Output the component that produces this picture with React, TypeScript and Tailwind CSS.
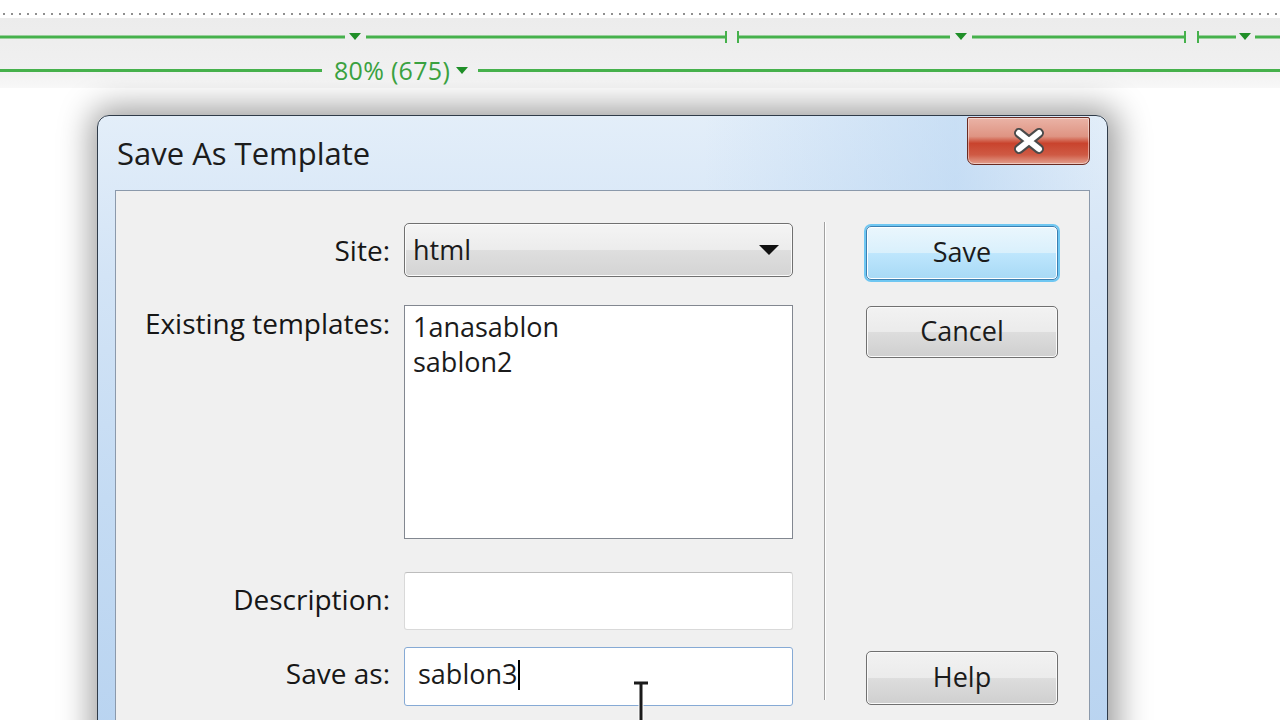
import React from "react";

const GREEN = "#46b14c";
const DARK_GREEN = "#1f8f28";

function RulerTop() {
  // upper guide: segments, drop markers and column ticks
  const seg = (x1: number, x2: number) => (
    <line key={`s${x1}`} x1={x1} y1={7} x2={x2} y2={7} stroke={GREEN} strokeWidth={3} />
  );
  const tick = (x: number) => (
    <line key={`t${x}`} x1={x} y1={1} x2={x} y2={13} stroke={GREEN} strokeWidth={2} />
  );
  const tri = (cx: number) => (
    <polygon key={`p${cx}`} points={`${cx - 6},3 ${cx + 6},3 ${cx},10`} fill={DARK_GREEN} />
  );
  return (
    <svg width={1280} height={14} className="block">
      {seg(0, 345)}
      {tri(355)}
      {seg(366, 726)}
      {tick(726)}
      {tick(738)}
      {seg(738, 950)}
      {tri(961)}
      {seg(972, 1185)}
      {tick(1185)}
      {tick(1198)}
      {seg(1198, 1236)}
      {tri(1245)}
      {seg(1255, 1280)}
    </svg>
  );
}

function Ruler() {
  return (
    <div className="h-[88px] w-full">
      <div className="h-[18px] bg-white pt-[13px]">
        <div className="h-[2px] w-full bg-[radial-gradient(circle,#8f8f8f_1px,transparent_1.3px)] bg-[length:8px_2px]" />
      </div>
      <div className="h-[70px] bg-[linear-gradient(180deg,#ececec,#f0f0f0_70%,#f8f8f8)] pt-[12px]">
        <RulerTop />
        <div className="mt-[12px] flex h-[28px] items-center">
          <div className="h-[3px] w-[322px] bg-[#46b14c]" />
          <span className="ml-[12px] text-[25px] leading-none tracking-[0.3px] text-[#3aa140]">80% (675)</span>
          <svg width={12} height={8} className="ml-[6px] mt-[2px]">
            <polygon points="0,0 12,0 6,7" fill={DARK_GREEN} />
          </svg>
          <div className="ml-[10px] h-[3px] flex-1 bg-[#46b14c]" />
        </div>
      </div>
    </div>
  );
}

function CloseButton() {
  return (
    <div className="mr-[17px] mt-[1px] flex h-[48px] w-[123px] items-center justify-center rounded-b-[7px] rounded-t-[2px] border border-[#6a2b22] bg-[linear-gradient(180deg,#eab3a6_0%,#df9483_40%,#c9432d_55%,#cf5a44_80%,#e3a08f_100%)] shadow-[inset_0_0_0_1px_rgba(255,255,255,0.45)]">
      <svg width={36} height={28} viewBox="0 0 36 28">
        <path d="M8 6 L28 22 M28 6 L8 22" stroke="#4a4a4a" strokeWidth={10} strokeLinecap="round" />
        <path d="M8 6 L28 22 M28 6 L8 22" stroke="#ffffff" strokeWidth={6} strokeLinecap="round" />
      </svg>
    </div>
  );
}

function PushButton({ label, primary }: { label: string; primary?: boolean }) {
  const cls = primary
    ? "border-[#3c7fb1] bg-[linear-gradient(180deg,#eaf6fd_0%,#d9f0fc_50%,#bee6fd_51%,#a7d9f5_100%)] shadow-[0_0_0_2px_#6fc7f2,inset_0_0_0_1px_#ffffff]"
    : "border-[#707070] bg-[linear-gradient(180deg,#f2f2f2_0%,#ebebeb_50%,#dddddd_51%,#cfcfcf_100%)] shadow-[inset_0_0_0_1px_#fafafa]";
  return (
    <div className={`flex w-[192px] items-center justify-center rounded-[5px] border pb-[2px] text-[27px] text-[#1b1b1b] ${cls}`}>
      {label}
    </div>
  );
}

function Label({ text, top, lift = "" }: { text: string; top?: boolean; lift?: string }) {
  return (
    <div className={`flex h-full justify-end text-[28px] leading-[36px] text-[#161616] ${top ? "items-start" : "items-center"} ${lift}`}>
      {text}
    </div>
  );
}

export default function App() {
  return (
    <div className="relative h-[720px] w-[1280px] overflow-hidden bg-white font-['Open_Sans',sans-serif]">
      <Ruler />

      <div className="pl-[97px] pt-[27px]">
        <div className="flex h-[640px] w-[1011px] flex-col rounded-t-[12px] border border-[#2f3b49] bg-[linear-gradient(180deg,#e3eef9_0%,#d3e4f6_25%,#c4dbf3_60%,#b8d3f0_100%)] shadow-[2px_0_32px_8px_rgba(0,0,0,0.38)]">
          {/* title bar */}
          <div className="flex h-[74px] items-start justify-between bg-[linear-gradient(90deg,transparent_60%,rgba(170,205,240,0.45)_85%,transparent)]">
            <div className="pl-[19px] pt-[15px] text-[31px] leading-[44px] text-[#1c1c1c]">Save As Template</div>
            <CloseButton />
          </div>

          {/* client area */}
          <div className="mx-[17px] flex flex-1 items-start border border-[#8b99ab] bg-[#f0f0f0]">
            <div className="grid grid-cols-[274px_389px] content-start gap-x-[14px] pt-[32px]">
              <Label text="Site:" />
              <div className="flex h-[54px] items-center justify-between rounded-[5px] border border-[#707070] bg-[linear-gradient(180deg,#f4f4f4_0%,#ececec_50%,#dedede_51%,#d4d4d4_100%)] pl-[8px] pr-[13px] text-[27px] text-[#1b1b1b] shadow-[inset_0_0_0_1px_#fbfbfb]">
                <span>html</span>
                <svg width={20} height={11}>
                  <polygon points="0,0 20,0 10,10" fill="#111" />
                </svg>
              </div>

              <div className="mt-[28px]">
                <Label text="Existing templates:" top />
              </div>
              <div className="mt-[28px] h-[234px] border border-[#828790] bg-white pl-[8px] pt-[3px] text-[27px] leading-[35px] text-[#1b1b1b]">
                <div>1anasablon</div>
                <div>sablon2</div>
              </div>

              <div className="mt-[33px]">
                <Label text="Description:" lift="pb-[5px]" />
              </div>
              <div className="mt-[33px] h-[58px] rounded-[3px] border border-[#d9d9d9] border-t-[#bdbdbd] bg-white" />

              <div className="mt-[17px]">
                <Label text="Save as:" lift="pb-[7px]" />
              </div>
              <div className="mt-[17px] flex h-[59px] items-center rounded-[3px] border border-[#86aad5] bg-white pb-[4px] pl-[13px] text-[27px] text-[#1b1b1b]">
                <span>sablon3</span>
                <span className="ml-[1px] h-[30px] w-[2px] bg-black" />
              </div>
            </div>

            <div className="ml-[31px] mt-[31px] h-[478px] w-[2px] border-l border-r border-l-[#a0a0a0] border-r-white" />

            <div className="ml-[40px] flex flex-col">
              <div className="mt-[35px] flex h-[54px]">
                <PushButton label="Save" primary />
              </div>
              <div className="mt-[26px] flex h-[52px]">
                <PushButton label="Cancel" />
              </div>
              <div className="mt-[293px] flex h-[54px]">
                <PushButton label="Help" />
              </div>
            </div>
          </div>
        </div>
      </div>

      {/* mouse I-beam cursor over the Save as field */}
      <svg width={20} height={42} className="absolute left-[631px] top-[680px]">
        <path d="M3 3 H17 M10 3 V40" stroke="#ffffff" strokeWidth={5} />
        <path d="M3 3 H17 M10 3 V40" stroke="#1a1a1a" strokeWidth={3} />
      </svg>
    </div>
  );
}
